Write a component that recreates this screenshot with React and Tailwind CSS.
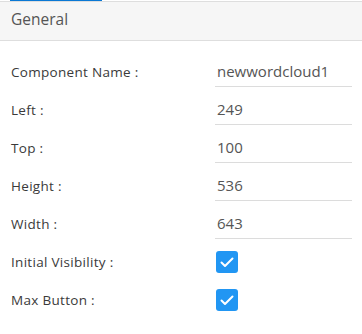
import React from "react";

const fields = [
  { label: "Component Name :", value: "newwordcloud1" },
  { label: "Left :", value: "249" },
  { label: "Top :", value: "100" },
  { label: "Height :", value: "536" },
  { label: "Width :", value: "643" },
];

const checks = ["Initial Visibility :", "Max Button :"];

const Check = () => (
  <span className="w-[22px] h-[22px] rounded-[3px] bg-[#2196f3] flex items-center justify-center">
    <svg width="16" height="16" viewBox="0 0 16 16" fill="none">
      <path d="M2.5 8.5l3.5 3.5 7.5-7.5" stroke="#fff" strokeWidth="2" strokeLinecap="round" strokeLinejoin="round" />
    </svg>
  </span>
);

export default function App() {
  return (
    <div className="w-[362px] h-[334px] bg-white font-['Open_Sans',sans-serif] overflow-hidden">
      {/* Tab indicator + header */}
      <div className="ml-[10px] w-[92px] h-[1px] bg-[#0a78d4]" />
      <div className="h-[40px] bg-[#f6f6f6] border-t border-b border-[#dedede] flex items-center px-[11px] pb-[3px]">
        <span className="text-[15.5px] text-[#555]">General</span>
      </div>

      <div className="pt-[8px]">
        {fields.map((f) => (
          <div key={f.label} className="flex items-end h-[38px]">
            <div className="w-[215px] pl-[11px] h-[30px] flex items-center text-[13.5px] tracking-[0.3px] text-[#3a3a3a]">
              {f.label}
            </div>
            <div className="w-[137px] h-[30px] border-b border-[#dcdcdc] flex items-center pl-[2px] text-[15px] text-[#555]">
              {f.value}
            </div>
          </div>
        ))}
        {checks.map((c) => (
          <div key={c} className="flex items-end h-[38px]">
            <div className="w-[215px] pl-[11px] h-[30px] flex items-center text-[13.5px] tracking-[0.3px] text-[#3a3a3a]">
              {c}
            </div>
            <div className="h-[30px] flex items-center pl-[1px]">
              <Check />
            </div>
          </div>
        ))}
      </div>
    </div>
  );
}
